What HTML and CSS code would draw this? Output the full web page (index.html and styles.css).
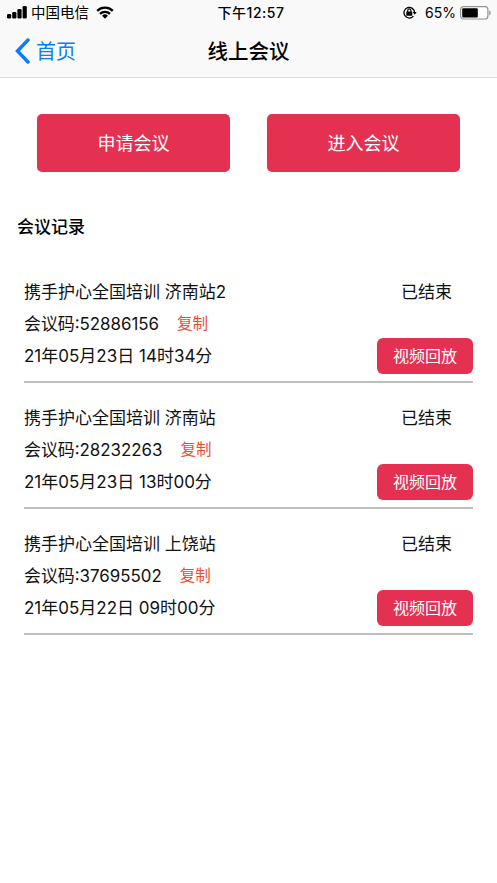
FILE: index.html
```
<!DOCTYPE html>
<html lang="zh-CN">
<head>
    <meta charset="UTF-8">
    <meta name="viewport" content="width=device-width, initial-scale=1.0">
    <title>线上会议</title>
    <link rel="stylesheet" href="styles.css">
</head>
<body>

    <header>
        <div class="status-bar">
            <div class="status-left">
                <svg class="signal" width="20" height="13" viewBox="0 0 20 13">
                    <rect x="0" y="8" width="4.2" height="4.5" rx="1.2"/>
                    <rect x="5.2" y="6" width="4.2" height="6.5" rx="1.2"/>
                    <rect x="10.4" y="3" width="4.2" height="9.5" rx="1.2"/>
                    <rect x="15.6" y="0" width="4.2" height="12.5" rx="1.2"/>
                </svg>
                <span class="carrier">中国电信</span>
                <svg class="wifi" width="18" height="13" viewBox="0 0 18 13">
                    <path d="M1.2 4.8a11.2 11.2 0 0 1 15.6 0M4 7.8a7.2 7.2 0 0 1 10 0" fill="none" stroke="#000" stroke-width="2.3"/>
                    <path d="M9 12.7 6.1 9.8a4.1 4.1 0 0 1 5.8 0z"/>
                </svg>
            </div>
            <div class="time">下午12:57</div>
            <div class="status-right">
                <svg class="lock" width="14" height="13" viewBox="0 0 14 13">
                    <path d="M10.4 10.1A5.3 5.3 0 1 1 11.6 6.5" fill="none" stroke="#000" stroke-width="1.3"/>
                    <path d="M9.7 6.1h4l-2 2.7z"/>
                    <rect x="3.3" y="5.5" width="6" height="4.2" rx=".5"/>
                    <path d="M4.7 6V4.5a1.6 1.6 0 0 1 3.2 0V6" fill="none" stroke="#000" stroke-width="1.1"/>
                </svg>
                <span class="percent">65%</span>
                <svg class="battery" width="32" height="14" viewBox="0 0 32 14">
                    <rect x=".6" y=".6" width="27.3" height="12.4" rx="3" fill="#fff" stroke="#929292" stroke-width="1.2"/>
                    <rect x="2.2" y="2.2" width="15.6" height="9.2" rx="1"/>
                    <path d="M29.2 4.4c2 .8 2 4.1 0 4.9z" fill="#929292"/>
                </svg>
            </div>
        </div>
        <nav>
            <a href="#" class="back">
                <svg width="15" height="26" viewBox="0 0 15 26">
                    <path d="M13 2 2.5 13 13 24" fill="none" stroke="#087dfc" stroke-width="3.4" stroke-linecap="round" stroke-linejoin="miter"/>
                </svg>
                <span>首页</span>
            </a>
            <h1>线上会议</h1>
        </nav>
    </header>

    <section class="actions">
        <button>申请会议</button>
        <button>进入会议</button>
    </section>

    <h2>会议记录</h2>

    <ul class="records">
        <li>
            <div class="row"><span>携手护心全国培训 济南站2</span><span class="state">已结束</span></div>
            <div class="row"><span class="code">会议码:52886156</span><a href="#" class="copy">复制</a></div>
            <div class="row"><span>21年05月23日 14时34分</span><button class="replay">视频回放</button></div>
        </li>
        <li>
            <div class="row"><span>携手护心全国培训 济南站</span><span class="state">已结束</span></div>
            <div class="row"><span class="code">会议码:28232263</span><a href="#" class="copy">复制</a></div>
            <div class="row"><span>21年05月23日 13时00分</span><button class="replay">视频回放</button></div>
        </li>
        <li>
            <div class="row"><span>携手护心全国培训 上饶站</span><span class="state">已结束</span></div>
            <div class="row"><span class="code">会议码:37695502</span><a href="#" class="copy">复制</a></div>
            <div class="row"><span>21年05月22日 09时00分</span><button class="replay">视频回放</button></div>
        </li>
    </ul>

</body>
</html>
```
FILE: styles.css
```
* {
    box-sizing: border-box;
}

body {
    margin: 0;
    min-height: 100vh;
    font-family: Inter, "Noto Sans CJK SC", sans-serif;
    font-size: 16px;
    color: #111;
    background-color: #fff;
}

a {
    text-decoration: none;
}

button {
    padding: 0 0 2px;
    border: none;
    color: #fff;
    background-color: #e53151;
    font-family: inherit;
    cursor: pointer;
}

/* Top bar */
header {
    height: 78px;
    background-color: #f9f9f9;
    border-bottom: 1px solid #dcdcdc;
    color: #000;
}

.status-bar {
    display: grid;
    grid-template-columns: 1fr auto 1fr;
    align-items: center;
    height: 26px;
    padding: 0 5px 0 7px;
    font-size: 14.5px;
    line-height: 26px;
}

.status-left,
.status-right {
    display: flex;
    align-items: center;
}

.status-left svg {
    margin-bottom: 1px;
}

.status-right {
    justify-content: flex-end;
}

.carrier {
    margin: 0 7px 0 4px;
}

.time {
    font-size: 14px;
    font-weight: 500;
    letter-spacing: 0.5px;
    padding-left: 3px;
}

.lock {
    margin-bottom: 2px;
}

.percent {
    margin: 0 4px 0 8px;
    font-size: 14px;
}

nav {
    display: grid;
    grid-template-columns: 1fr auto 1fr;
    align-items: center;
    height: 51px;
    padding: 0 15px;
}

.back {
    display: flex;
    align-items: center;
    gap: 6px;
    color: #087dfc;
    font-size: 20px;
    line-height: 30px;
}

.back svg {
    margin-bottom: 2px;
}

h1 {
    margin: 0;
    font-size: 20.5px;
    font-weight: 500;
    line-height: 30px;
}

/* Main buttons */
.actions {
    display: grid;
    grid-template-columns: 1fr 1fr;
    gap: 37px;
    padding: 36px 37px 0;
}

.actions button {
    height: 58px;
    border-radius: 5px;
    font-size: 18px;
}

h2 {
    margin: 39px 0 0 17px;
    font-size: 17px;
    font-weight: 500;
    line-height: 32px;
    color: #000;
}

/* Meeting list */
.records {
    list-style-type: none;
    margin: 14px 24px 0;
    padding: 0;
}

.records li {
    height: 126px;
    padding-top: 19px;
    border-bottom: 2px solid #bebebe;
}

.row {
    display: flex;
    align-items: center;
    height: 32px;
    font-size: 17px;
    line-height: 32px;
    white-space: nowrap;
}

.state {
    margin-left: auto;
    margin-right: 21px;
}

.code {
    font-size: 16.9px;
}

.copy {
    margin-left: 18px;
    font-size: 15.5px;
    color: #f4492d;
}

.replay {
    flex: none;
    width: 96px;
    height: 36px;
    margin-left: auto;
    border-radius: 6px;
    font-size: 16px;
}
```
